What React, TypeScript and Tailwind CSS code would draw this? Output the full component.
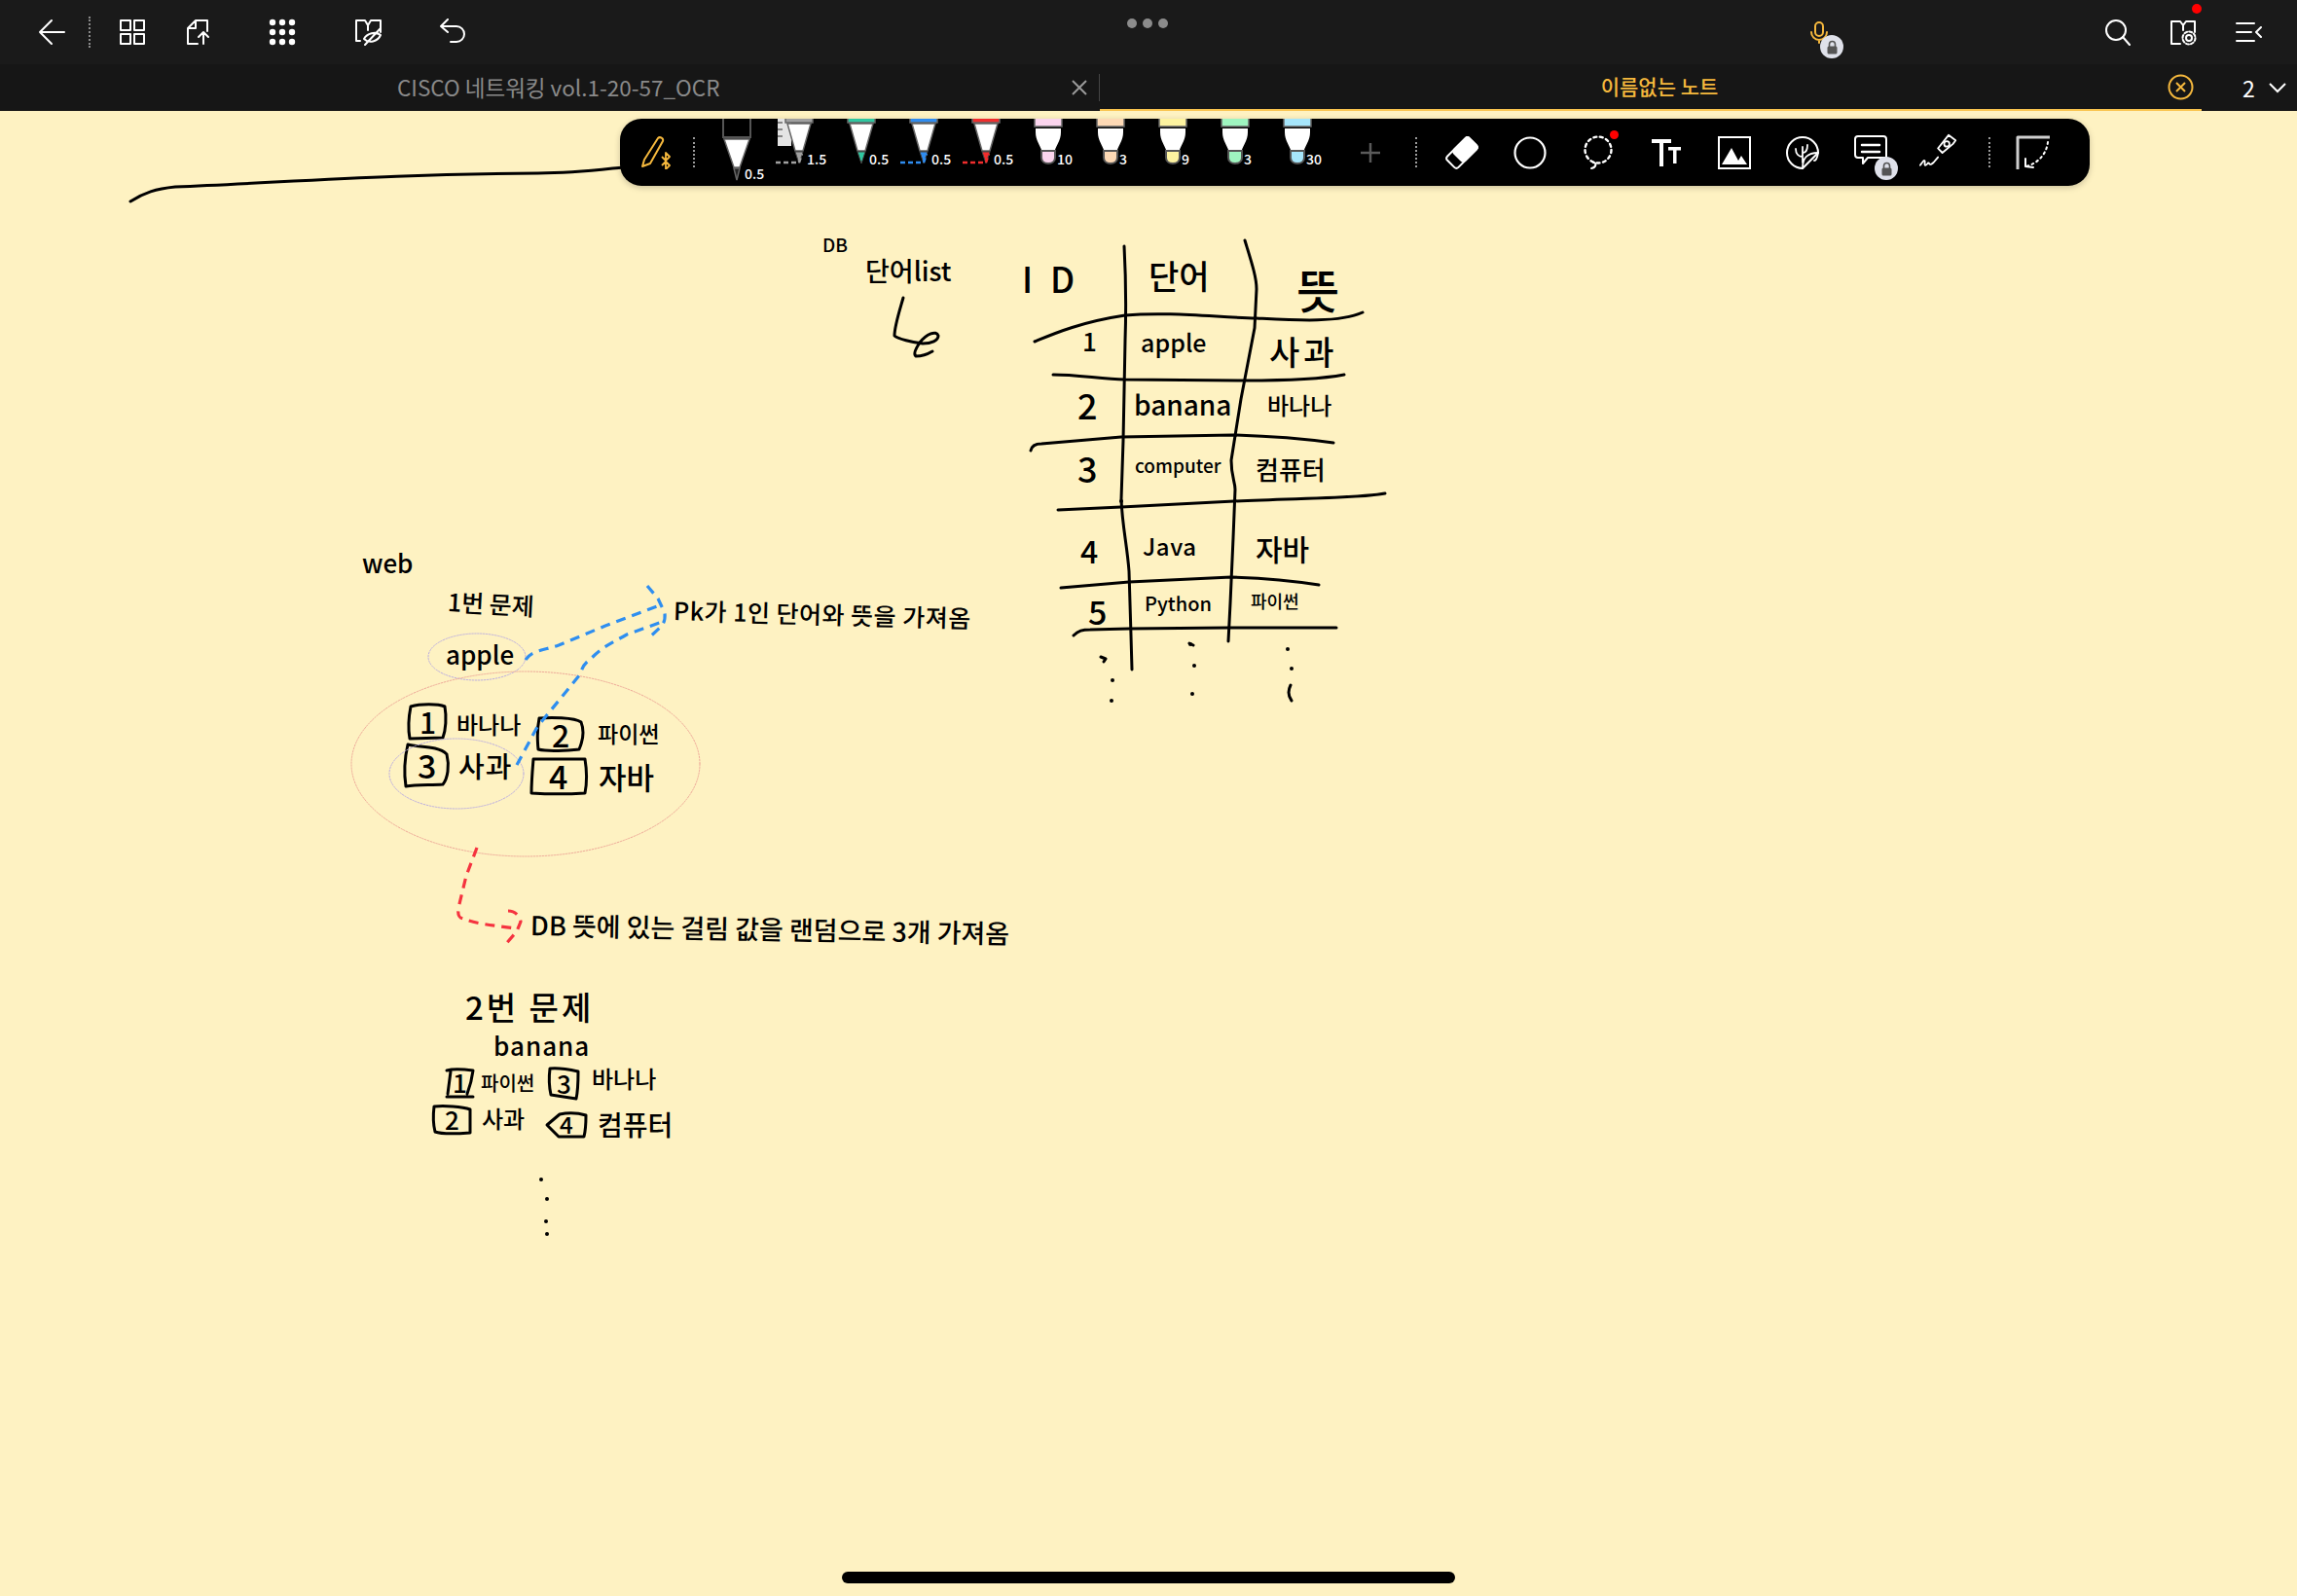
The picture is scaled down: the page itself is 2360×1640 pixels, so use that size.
import type { FC, ReactNode } from 'react';

const Ico: FC<{ className: string; box?: number; children: ReactNode }> = ({ className, box = 28, children }) => (
  <svg className={className} viewBox={`0 0 ${box} ${box}`} fill="none" stroke="currentColor" strokeWidth={2} strokeLinecap="round" strokeLinejoin="round">
    {children}
  </svg>
);

const LockBadge: FC<{ className: string }> = ({ className }) => (
  <div className={`absolute flex h-[24px] w-[24px] items-center justify-center rounded-full bg-[#dfe1ea] ${className}`}>
    <svg className="h-[15px] w-[13px]" viewBox="0 0 13 15" fill="none">
      <path d="M3.5 7V4.5a3 3 0 0 1 6 0V7" stroke="#555" strokeWidth={1.6} />
      <rect x={1.5} y={6.5} width={10} height={8} rx={1.5} fill="#555" />
    </svg>
  </div>
);

const TopBar: FC = () => (
  <header className="relative flex h-[66px] shrink-0 items-center bg-[#1a1a1a] pl-[39px] text-white">
    <Ico className="h-[28px] w-[28px]">
      <path d="M14 2 2 14l12 12M2 14h25" />
    </Ico>
    <div className="ml-[24px] h-[32px] border-l-2 border-dotted border-[#8a8a8a]" />
    <Ico className="ml-[29px] h-[28px] w-[28px]">
      <rect x={2} y={2} width={10} height={10} />
      <rect x={16} y={2} width={10} height={10} />
      <rect x={2} y={16} width={10} height={10} />
      <rect x={16} y={16} width={10} height={10} />
    </Ico>
    <Ico className="ml-[40px] h-[28px] w-[28px]">
      <path d="M13 26H3V10l8-8h12v11M11 2v8H3M19 26V14M14 19l5-5 5 5" />
    </Ico>
    <svg className="ml-[58px] h-[28px] w-[28px]" viewBox="0 0 28 28" fill="currentColor">
      {[4, 14, 24].map((y) => [4, 14, 24].map((x) => <circle key={`${x}-${y}`} cx={x} cy={y} r={3.2} />))}
    </svg>
    <Ico className="ml-[60px] h-[30px] w-[30px]" box={30}>
      <path d="M6 24H2V3h9l3 5 3-5h10v12M14 8v5" />
      <path d="M10 22c3-6 12-8 17-4-3 7-12 9-17 4ZM11 28 27 11" />
    </Ico>
    <Ico className="ml-[57px] h-[28px] w-[28px]">
      <path d="M9 1 2 8l7 6M2 8h16a7.5 7.5 0 0 1 0 16h-6" />
    </Ico>
    <div className="absolute left-[1158px] top-[19px] flex gap-[6px]">
      <div className="h-[10px] w-[10px] rounded-full bg-[#8c8c8c]" />
      <div className="h-[10px] w-[10px] rounded-full bg-[#8c8c8c]" />
      <div className="h-[10px] w-[10px] rounded-full bg-[#8c8c8c]" />
    </div>
    <div className="absolute left-[1858px] top-[18px] h-[30px] w-[22px] text-[#f5b83d]">
      <Ico className="h-[30px] w-[22px]" box={22}>
        <rect x={7} y={1} width={8} height={14} rx={4} />
        <path d="M3 11a8 8 0 0 0 16 0M11 19v3" />
      </Ico>
      <LockBadge className="left-[12px] top-[18px]" />
    </div>
    <div className="ml-auto flex items-center pr-[36px]">
      <Ico className="h-[28px] w-[28px]">
        <circle cx={12} cy={12} r={10} />
        <path d="m19 19 7 8" />
      </Ico>
      <div className="relative ml-[39px] h-[32px] w-[28px]">
        <Ico className="h-[32px] w-[28px]">
          <path d="M11 26H2V3h9l3 4 3-4h9v11M14 7v5" />
          <circle cx={20} cy={20} r={3} />
          <circle cx={20} cy={20} r={6.5} strokeDasharray="3 2" />
        </Ico>
        <div className="absolute -right-[5px] -top-[13px] h-[10px] w-[10px] rounded-full bg-[#ff0000]" />
      </div>
      <Ico className="ml-[39px] h-[28px] w-[28px]">
        <path d="M2 5h18M2 14h15M2 23h18M27 9l-5 5 5 5" />
      </Ico>
    </div>
  </header>
);

const TabBar: FC = () => (
  <div className="flex h-[48px] shrink-0 items-stretch bg-[#161616] font-['Noto_Sans_CJK_KR',sans-serif]">
    <div className="flex w-[1130px] items-center pl-[408px]">
      <span className="text-[22.5px] text-[#8a8a8a]">CISCO 네트워킹 vol.1-20-57_OCR</span>
      <svg className="ml-auto h-[16px] w-[16px]" viewBox="0 0 16 16" stroke="#9a9a9a" strokeWidth={2}>
        <path d="m1 1 14 14M15 1 1 15" />
      </svg>
      <div className="ml-[12px] h-[28px] border-l border-[#444]" />
    </div>
    <div className="relative flex w-[1132px] items-center justify-center border-b-2 border-[#f9c44f] pl-[18px]">
      <span className="text-[21px] font-medium text-[#f5b83d]">이름없는 노트</span>
      <svg className="absolute right-[8px] top-[10px] h-[27px] w-[27px]" viewBox="0 0 27 27" fill="none" stroke="#f5b83d" strokeWidth={2}>
        <circle cx={13.5} cy={13.5} r={12} />
        <path d="m9 9 9 9M18 9l-9 9" />
      </svg>
    </div>
    <div className="flex flex-1 items-center pl-[42px] text-white">
      <span className="text-[23px]">2</span>
      <svg className="ml-[14px] h-[12px] w-[18px]" viewBox="0 0 18 12" fill="none" stroke="white" strokeWidth={2}>
        <path d="m1 2 8 8 8-8" />
      </svg>
    </div>
  </div>
);

const penLabel = 'absolute font-[\'Liberation_Sans\',sans-serif] text-[14px] leading-none text-white';

const FinePen: FC<{ color: string; label: string; dash?: boolean; ruler?: boolean }> = ({ color, label, dash, ruler }) => (
  <div className="relative h-[69px] w-[64px]">
    <svg className="h-[69px] w-[64px]" viewBox="0 0 64 69" fill="none">
      {ruler && (
        <g>
          <rect x={10} y={-2} width={14} height={30} fill="#e4e4e4" />
          <path d="M10 4h5M10 11h5M10 18h5" stroke="#666" strokeWidth={1.5} />
        </g>
      )}
      <rect x={18} y={-2} width={28} height={6} fill={color} stroke="#666" strokeWidth={1.5} />
      <path d="M20 5h24l-8 28h-8Z" fill="#fff" stroke="#666" strokeWidth={1.5} />
      <path d="M28 34h8l-4 12Z" fill={color} stroke="#444" strokeWidth={1} />
      {dash && <path d="M8 45h24l3-9" stroke={color} strokeWidth={2.5} strokeDasharray="5 3" />}
    </svg>
    <span className={`${penLabel} left-[40px] top-[34px]`}>{label}</span>
  </div>
);

const MainPen: FC = () => (
  <div className="relative h-[69px] w-[64px]">
    <svg className="h-[69px] w-[64px]" viewBox="0 0 64 69" fill="none">
      <rect x={18} y={-4} width={28} height={23} stroke="#555" strokeWidth={2} />
      <path d="M19 21h26l-10 29h-6Z" fill="#fff" stroke="#666" strokeWidth={1.5} />
      <path d="M29 51h6l-3 12Z" fill="#222" stroke="#666" strokeWidth={1.5} />
    </svg>
    <span className={`${penLabel} left-[40px] top-[49px]`}>0.5</span>
  </div>
);

const Highlighter: FC<{ color: string; label: string }> = ({ color, label }) => (
  <div className="relative h-[69px] w-[64px]">
    <svg className="h-[69px] w-[64px]" viewBox="0 0 64 69" fill="none">
      <rect x={18} y={-2} width={28} height={10} fill={color} stroke="#666" strokeWidth={1.5} />
      <path d="M19 10h26v4c0 8-5 14-6 18H25c-1-4-6-10-6-18Z" fill="#fff" />
      <path d="M25 33h14v7c0 8-14 8-14 0Z" fill={color} stroke="#555" strokeWidth={2} />
    </svg>
    <span className={`${penLabel} left-[41px] top-[34px]`}>{label}</span>
  </div>
);

const Divider: FC<{ className: string }> = ({ className }) => (
  <div className={`h-[31px] border-l-2 border-dotted border-[#9a9a9a] ${className}`} />
);

const ToolCell: FC<{ children: ReactNode }> = ({ children }) => (
  <div className="relative flex h-[69px] w-[70px] items-center justify-center text-white">{children}</div>
);

const Toolbar: FC = () => (
  <div className="absolute left-[637px] top-[8px] flex h-[69px] w-[1510px] items-center overflow-hidden rounded-[22px] bg-black pl-[21px] shadow-[0_2px_6px_rgba(0,0,0,0.2)]">
    <svg className="h-[34px] w-[34px] shrink-0" viewBox="0 0 32 34" fill="none" stroke="#f5b83d" strokeWidth={2} strokeLinejoin="round">
      <path d="M1 31 3 24 17 2c2-2 6 0 5 3L9 28Z" />
      <path d="m25 17 4 4-4 4v-8 17l4-4-4-4-4 4M25 25l-4-4" strokeWidth={1.8} />
    </svg>
    <Divider className="ml-[20px]" />
    <div className="ml-[11px] flex shrink-0">
      <MainPen />
      <FinePen color="#a0a0a0" label="1.5" dash ruler />
      <FinePen color="#2fc7a0" label="0.5" />
      <FinePen color="#2f8cf0" label="0.5" dash />
      <FinePen color="#f02d2d" label="0.5" dash />
      <Highlighter color="#fbd5ee" label="10" />
      <Highlighter color="#fdd9b5" label="3" />
      <Highlighter color="#fdf3a0" label="9" />
      <Highlighter color="#9ff5c0" label="3" />
      <Highlighter color="#a6e6fb" label="30" />
    </div>
    <svg className="ml-[31px] h-[24px] w-[24px] shrink-0" viewBox="0 0 24 24" stroke="#5a5a5a" strokeWidth={2.5}>
      <path d="M12 2v20M2 12h20" />
    </svg>
    <Divider className="ml-[34px]" />
    <div className="ml-[11px] flex shrink-0">
      <ToolCell>
        <Ico className="h-[36px] w-[36px]" box={36}>
          <g transform="rotate(45 18 18)">
            <rect x={10} y={2} width={16} height={32} rx={3} />
            <rect x={10} y={2} width={16} height={22} rx={3} fill="currentColor" />
          </g>
        </Ico>
      </ToolCell>
      <ToolCell>
        <Ico className="h-[36px] w-[36px]" box={36}>
          <circle cx={18} cy={18} r={15.5} strokeWidth={2.2} />
        </Ico>
      </ToolCell>
      <ToolCell>
        <Ico className="h-[36px] w-[36px]" box={36}>
          <circle cx={18} cy={15} r={13.5} strokeDasharray="3 3.5" strokeWidth={2.4} />
          <path d="M13 28c4 0 3 5-2 6" strokeWidth={2} />
        </Ico>
        <div className="absolute left-[47px] top-[12px] h-[9px] w-[9px] rounded-full bg-[#ff0000]" />
      </ToolCell>
      <ToolCell>
        <svg className="h-[30px] w-[32px]" viewBox="0 0 32 30" fill="white">
          <rect x={1} y={1} width={20} height={4} />
          <rect x={9} y={1} width={4} height={28} />
          <rect x={18} y={9} width={13} height={3.5} />
          <rect x={23} y={9} width={3.5} height={17} />
        </svg>
      </ToolCell>
      <ToolCell>
        <svg className="h-[34px] w-[34px]" viewBox="0 0 34 34">
          <rect x={1} y={1} width={32} height={32} fill="none" stroke="white" strokeWidth={2} />
          <path d="M4 29 14 12l7 13 3-5 6 9Z" fill="white" />
        </svg>
      </ToolCell>
      <ToolCell>
        <Ico className="h-[36px] w-[36px]" box={36}>
          <path d="M18 34A16 16 0 1 1 34 18Z" />
          <path d="M18 34c0-10 4-16 16-16-1 6-2 8-4 8M18 28V12M18 22c-4 0-7-3-7-8M18 18c3 0 5-3 5-8" strokeWidth={1.8} />
        </Ico>
      </ToolCell>
      <ToolCell>
        <Ico className="h-[38px] w-[38px]" box={38}>
          <path d="M6 2h26a3 3 0 0 1 3 3v19H16l-5 6v-6H6a3 3 0 0 1-3-3V5a3 3 0 0 1 3-3Z" />
          <path d="M10 11h18M10 18h18" strokeWidth={2.5} />
        </Ico>
        <LockBadge className="left-[39px] top-[39px]" />
      </ToolCell>
      <ToolCell>
        <Ico className="h-[40px] w-[44px]" box={44}>
          <path d="M1 36c3-4 4-6 5-5s-1 5 1 5 3-4 4-2 3 1 5-1l5-6M26 22 21 17 33 2l8 6-3 4Z" />
          <circle cx={31} cy={12} r={3} />
        </Ico>
      </ToolCell>
    </div>
    <Divider className="ml-[16px]" />
    <Ico className="ml-[26px] h-[36px] w-[36px] shrink-0 text-white" box={36}>
      <path d="M2 35V2h33" stroke="#cfcfcf" strokeWidth={3} strokeLinecap="butt" />
      <path d="M33 7c-1 10-8 21-22 25" strokeDasharray="2 3.5" />
      <path d="m10 24 0 8 8 1" />
    </Ico>
  </div>
);

const strokes = [
  'M134 207C148 198 160 194 180 192C300 187 400 179 553 178C590 178 620 174 640 172',
  'M1155 253C1157 290 1157 320 1156 350L1154 453L1152 513C1153 540 1158 560 1160 587L1162 653L1163 688',
  'M1279 247C1286 270 1291 285 1291 297L1289 337L1275 410L1265 473C1265 490 1269 495 1269 503L1267 553L1264 620L1262 659',
  'M1063 351C1080 344 1109 331 1156 324C1200 320 1250 326 1291 327C1330 329 1375 332 1400 321',
  'M1082 385C1105 385 1130 389 1156 390L1279 391C1320 391 1355 390 1381 385',
  'M1059 463C1060 458 1064 456 1070 456L1152 449L1267 447C1300 448 1340 451 1370 455',
  'M1087 524L1152 521L1268 515C1330 512 1400 512 1423 507',
  'M1090 604L1160 598L1265 593C1300 594 1330 597 1355 601',
  'M1103 653C1108 648 1112 647 1120 647L1160 646L1263 645L1373 645',
  'M928 306C924 320 919 335 919 345C922 348 938 352 948 353C957 353 964 350 964 345C962 339 952 343 945 352C941 358 938 364 941 366C947 366 953 364 958 361',
  'M1131 675 1136 677 1134 680M1222 661 1226 663M1326 704C1323 710 1324 716 1327 720',
  // handwritten boxes, first block
  'M422 726C432 723 450 723 457 726C459 737 458 750 455 758L421 759C419 748 420 736 422 726Z',
  'M419 765C430 768 450 766 459 775C462 787 460 800 455 806C443 807 428 806 417 808C415 795 416 778 419 765Z',
  'M554 738C565 737 590 737 597 742C601 752 598 763 595 770C582 771 565 773 553 770C552 760 552 748 554 738Z',
  'M548 780H601C603 792 603 805 601 815C585 816 562 816 546 815C546 803 547 792 548 780Z',
  // handwritten boxes, second block
  'M459 1100C466 1098 478 1099 486 1100C485 1108 483 1116 480 1124M459 1127H486M463 1101 460 1124',
  'M565 1098C573 1097 585 1099 594 1101C594 1110 594 1120 592 1129L566 1125C564 1116 564 1106 565 1098Z',
  'M446 1137C456 1136 475 1137 483 1140L483 1164C470 1165 455 1166 447 1163C445 1155 445 1145 446 1137Z',
  'M562 1156 575 1145C585 1143 595 1144 602 1146C602 1153 602 1160 600 1168L574 1168Z',
];

const dots: [number, number][] = [
  [1143, 699],
  [1142, 720],
  [1223, 662],
  [1227, 684],
  [1225, 713],
  [1323, 667],
  [1327, 687],
  [1152, 515],
  [562, 1232],
  [561, 1255],
  [562, 1268],
  [556, 1212],
];

const Ink: FC<{ className: string; children: ReactNode }> = ({ className, children }) => (
  <span className={`absolute whitespace-nowrap leading-none text-black ${className}`}>{children}</span>
);

const Canvas: FC = () => (
  <main className="relative flex-1 bg-[#fef2c2] font-['Noto_Sans_CJK_KR',sans-serif] font-medium">
    <svg className="absolute inset-0 h-[1526px] w-[2360px]" viewBox="0 114 2360 1526" fill="none" strokeLinecap="round" strokeLinejoin="round">
      {strokes.map((d) => (
        <path key={d} d={d} stroke="#000" strokeWidth={3} />
      ))}
      {dots.map(([x, y]) => (
        <circle key={`${x}-${y}`} cx={x} cy={y} r={2} fill="#000" />
      ))}
      <ellipse cx={490} cy={675} rx={50} ry={24} stroke="#bcaee0" strokeWidth={1} strokeDasharray="1.5 1.5" />
      <ellipse cx={469} cy={795} rx={69} ry={36} stroke="#bcaee0" strokeWidth={1} strokeDasharray="1.5 1.5" />
      <ellipse cx={540} cy={785} rx={179} ry={95} stroke="#eea898" strokeWidth={1} strokeDasharray="1.5 1.5" />
      <g stroke="#2e8ef0" strokeWidth={3.2} strokeDasharray="10 7" strokeLinecap="butt">
        <path d="M540 678C546 668 560 668 574 663L622 643L678 622" />
        <path d="M531 786L552 747L596 693C600 680 604 680 609 675C620 664 630 660 644 652L683 638" />
        <path d="M665 602L676 615L683 630C684 640 680 642 678 645L665 657" />
      </g>
      <g stroke="#f5333f" strokeWidth={3.2} strokeDasharray="10 7" strokeLinecap="butt">
        <path d="M490 871L479 900L471 933C470 942 472 943 476 944C490 950 510 951 529 954" />
        <path d="M522 936C530 936 534 942 535 947L531 957L518 972" />
      </g>
    </svg>

    <Ink className="left-[845px] top-[127px] text-[19px]">DB</Ink>
    <Ink className="left-[889px] top-[150px] text-[27px]">단어list</Ink>

    <Ink className="left-[1050px] top-[153px] text-[36px] tracking-[18px]">ID</Ink>
    <Ink className="left-[1180px] top-[152px] text-[34px]">단어</Ink>
    <Ink className="left-[1332px] top-[158px] text-[48px]">뜻</Ink>
    <Ink className="left-[1112px] top-[223px] text-[26px]">1</Ink>
    <Ink className="left-[1172px] top-[225px] text-[25px]">apple</Ink>
    <Ink className="left-[1304px] top-[230px] text-[34px] tracking-[4px]">사과</Ink>
    <Ink className="left-[1107px] top-[283px] text-[36px]">2</Ink>
    <Ink className="left-[1165px] top-[287px] text-[28px]">banana</Ink>
    <Ink className="left-[1302px] top-[290px] text-[24px]">바나나</Ink>
    <Ink className="left-[1107px] top-[348px] text-[36px]">3</Ink>
    <Ink className="left-[1166px] top-[354px] text-[19px]">computer</Ink>
    <Ink className="left-[1290px] top-[355px] text-[26px]">컴퓨터</Ink>
    <Ink className="left-[1110px] top-[435px] text-[32px]">4</Ink>
    <Ink className="left-[1174px] top-[435px] text-[24px] tracking-wide">Java</Ink>
    <Ink className="left-[1290px] top-[434px] text-[30px]">자바</Ink>
    <Ink className="left-[1118px] top-[497px] text-[34px]">5</Ink>
    <Ink className="left-[1176px] top-[496px] text-[20px]">Python</Ink>
    <Ink className="left-[1285px] top-[494px] text-[18px]">파이썬</Ink>

    <Ink className="left-[372px] top-[451px] text-[26px]">web</Ink>
    <Ink className="left-[460px] top-[491px] origin-left rotate-[3deg] text-[25px]">1번 문제</Ink>
    <Ink className="left-[458px] top-[545px] text-[26px]">apple</Ink>
    <Ink className="left-[692px] top-[500px] origin-left rotate-[1.5deg] text-[25px] tracking-[0.5px]">Pk가 1인 단어와 뜻을 가져옴</Ink>

    <Ink className="left-[431px] top-[612px] text-[30px]">1</Ink>
    <Ink className="left-[469px] top-[618px] text-[24px]">바나나</Ink>
    <Ink className="left-[567px] top-[624px] text-[32px]">2</Ink>
    <Ink className="left-[614px] top-[628px] text-[23px]">파이썬</Ink>
    <Ink className="left-[429px] top-[655px] text-[34px]">3</Ink>
    <Ink className="left-[471px] top-[658px] text-[29px] tracking-[1px]">사과</Ink>
    <Ink className="left-[564px] top-[666px] text-[34px]">4</Ink>
    <Ink className="left-[615px] top-[668px] text-[31px]">자바</Ink>

    <Ink className="left-[545px] top-[822px] origin-left rotate-[1deg] text-[27px]">DB 뜻에 있는 걸림 값을 랜덤으로 3개 가져옴</Ink>

    <Ink className="left-[478px] top-[904px] text-[33px] tracking-[3px]">2번 문제</Ink>
    <Ink className="left-[507px] top-[947px] text-[26px] tracking-[1px]">banana</Ink>
    <Ink className="left-[465px] top-[985px] text-[26px]">1</Ink>
    <Ink className="left-[494px] top-[989px] text-[20px]">파이썬</Ink>
    <Ink className="left-[572px] top-[986px] text-[26px]">3</Ink>
    <Ink className="left-[608px] top-[982px] text-[24px]">바나나</Ink>
    <Ink className="left-[457px] top-[1023px] text-[26px]">2</Ink>
    <Ink className="left-[495px] top-[1023px] text-[24px]">사과</Ink>
    <Ink className="left-[575px] top-[1029px] text-[24px]">4</Ink>
    <Ink className="left-[614px] top-[1027px] text-[28px]">컴퓨터</Ink>

    <Toolbar />
    <div className="absolute bottom-[13px] left-[865px] h-[12px] w-[630px] rounded-full bg-black" />
  </main>
);

const App: FC = () => (
  <div className="flex h-[1640px] w-[2360px] flex-col overflow-hidden">
    <TopBar />
    <TabBar />
    <Canvas />
  </div>
);

export default App;
